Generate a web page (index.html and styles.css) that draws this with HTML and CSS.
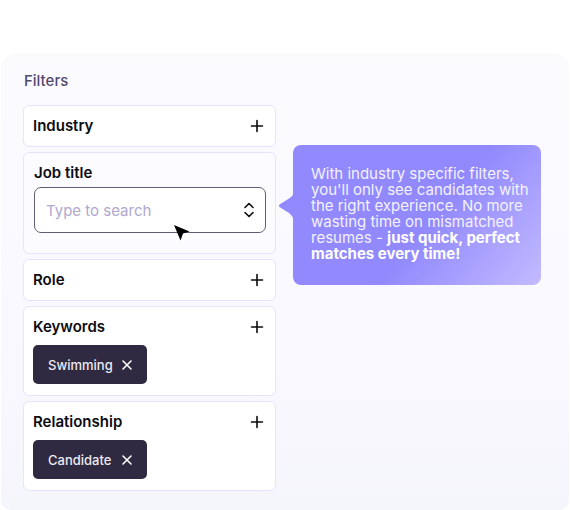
FILE: index.html
```
<!DOCTYPE html>
<html lang="en">
<head>
    <meta charset="UTF-8">
    <meta name="viewport" content="width=device-width, initial-scale=1.0">
    <title>Filters</title>
    <link rel="stylesheet" href="styles.css">
</head>
<body>
    <main class="panel">
        <!-- Filters -->
        <section class="filters">
            <h1 class="filters-title">Filters</h1>

            <div class="card">
                <div class="card-header">
                    <h2 class="card-title">Industry</h2>
                    <button class="icon-btn" type="button" aria-label="Add industry">
                        <svg class="icon" viewBox="0 0 14 14"><path d="M7 1.500v11M1.500 7h11"/></svg>
                    </button>
                </div>
            </div>

            <div class="card card-open">
                <label class="card-title" for="job-title">Job title</label>
                <div class="search">
                    <input class="search-input" type="text" id="job-title" placeholder="Type to search">
                    <svg class="search-arrows" viewBox="0 0 12 16"><path d="M2 5.5L6 1.5l4 4M2 10.5l4 4 4-4"/></svg>
                    <svg class="cursor" viewBox="0 0 16 16"><path d="M0 0L15.500 6.500L9 8.500L6.500 15.500Z"/></svg>
                </div>
            </div>

            <div class="card">
                <div class="card-header">
                    <h2 class="card-title">Role</h2>
                    <button class="icon-btn" type="button" aria-label="Add role">
                        <svg class="icon" viewBox="0 0 14 14"><path d="M7 1.500v11M1.500 7h11"/></svg>
                    </button>
                </div>
            </div>

            <div class="card">
                <div class="card-header">
                    <h2 class="card-title">Keywords</h2>
                    <button class="icon-btn" type="button" aria-label="Add keyword">
                        <svg class="icon" viewBox="0 0 14 14"><path d="M7 1.500v11M1.500 7h11"/></svg>
                    </button>
                </div>
                <button class="chip" type="button">
                    Swimming
                    <svg class="chip-close" viewBox="0 0 12 12"><path d="M2 2l8 8M10 2l-8 8"/></svg>
                </button>
            </div>

            <div class="card">
                <div class="card-header">
                    <h2 class="card-title">Relationship</h2>
                    <button class="icon-btn" type="button" aria-label="Add relationship">
                        <svg class="icon" viewBox="0 0 14 14"><path d="M7 1.500v11M1.500 7h11"/></svg>
                    </button>
                </div>
                <button class="chip" type="button">
                    Candidate
                    <svg class="chip-close" viewBox="0 0 12 12"><path d="M2 2l8 8M10 2l-8 8"/></svg>
                </button>
            </div>
        </section>

        <!-- Callout -->
        <aside class="callout">
            <svg class="callout-arrow" viewBox="0 0 16 28"><path d="M16 0Q15 4 11 6.500L1.500 12.500Q0 14 1.500 15L11 21Q15 24 16 28Z"/></svg>
            <p class="callout-text">With industry specific filters, you'll only see candidates with the right experience. No more wasting time on mismatched resumes - <strong>just quick, perfect matches every time!</strong></p>
        </aside>
    </main>
</body>
</html>
```

FILE: styles.css
```
* {
    box-sizing: border-box;
}
body {
    margin: 0;
    padding: 53px 1px 0;
    font-family: Inter, "Liberation Sans", sans-serif;
    font-size: 15px;
    line-height: 20px;
    color: #0c0c10;
    background-color: #fff;
}
svg {
    display: block;
    fill: none;
    stroke-linecap: round;
    stroke-linejoin: round;
}
.panel {
    display: flex;
    align-items: flex-start;
    gap: 17px;
    padding: 18px 28px 19px 22px;
    border-radius: 16px 16px 10px 10px;
    background: linear-gradient(#fbfbfe, #faf9ff 45%, #f5f6fc);
}

/* Filter list */
.filters {
    display: flex;
    flex-direction: column;
    gap: 5px;
    flex: 0 1 253px;
}
.filters-title {
    margin: 0 0 9px;
    padding-left: 1px;
    font-size: 15px;
    font-weight: 500;
    color: #514870;
}
.card {
    padding: 10px 10px 10px 9px;
    border: 1px solid #e5e3fe;
    border-radius: 6px;
    background-color: #fff;
}
.card-open {
    padding: 10px 9px 20px 10px;
    background-color: #fcfbff;
}
.card-header {
    display: flex;
    justify-content: space-between;
    align-items: center;
}
.card-title {
    display: block;
    margin: 0;
    font-size: 15px;
    font-weight: 600;
}
.icon-btn {
    padding: 0 1px;
    border: none;
    background: none;
    cursor: pointer;
}
.icon {
    width: 14px;
    height: 14px;
    stroke: #0c0c10;
    stroke-width: 1.6;
}

/* Search box */
.search {
    position: relative;
    margin-top: 4px;
}
.search-input {
    display: block;
    width: 100%;
    height: 46px;
    padding: 0 36px 0 11px;
    border: 1px solid #625c73;
    border-radius: 7px;
    font: inherit;
    background-color: #fff;
}
.search-input::placeholder {
    color: #b0a8d0;
    opacity: 1;
}
.search-arrows {
    position: absolute;
    top: 15px;
    right: 11px;
    width: 12px;
    height: 16px;
    stroke: #0c0c10;
    stroke-width: 1.6;
    pointer-events: none;
}
.cursor {
    position: absolute;
    top: 38px;
    left: 140px;
    width: 16px;
    height: 16px;
    fill: #000;
    pointer-events: none;
}

/* Selected values */
.chip {
    display: flex;
    justify-content: space-between;
    align-items: center;
    gap: 8px;
    min-width: 114px;
    height: 39px;
    margin: 8px 0 1px;
    padding: 0 14px 0 15px;
    border: none;
    border-radius: 5px;
    font: inherit;
    font-size: 13px;
    font-weight: 500;
    color: #ebe9f2;
    background-color: #2f2a41;
    cursor: pointer;
}
.chip-close {
    width: 12px;
    height: 12px;
    stroke: #fff;
    stroke-width: 1.6;
}

/* Callout next to the list */
.callout {
    position: relative;
    flex: 0 1 248px;
    margin-top: 74px;
    padding: 21px 8px 23px 18px;
    border-radius: 8px;
    color: #f4f2ff;
    background: linear-gradient(130deg, #9189fd 55%, #c3bbff);
}
.callout-arrow {
    position: absolute;
    top: 47px;
    left: -15px;
    width: 16px;
    height: 28px;
    fill: #9189fd;
}
.callout-text {
    margin: 0;
    line-height: 16px;
}
.callout-text strong {
    font-weight: 700;
    color: #fff;
}
```
